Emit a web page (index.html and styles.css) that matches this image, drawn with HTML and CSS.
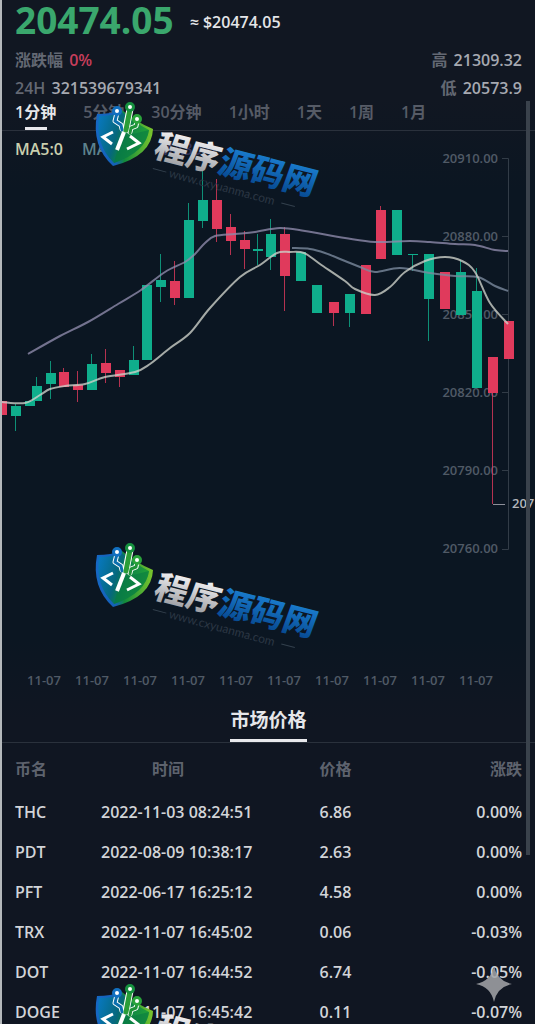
FILE: index.html
```html
<!DOCTYPE html>
<html lang="zh-CN">
<head>
    <meta charset="UTF-8">
    <meta name="viewport" content="width=device-width, initial-scale=1.0">
    <title>市场价格</title>
    <link rel="stylesheet" href="styles.css">
</head>
<body>
    <div class="page">
        <header class="quote">
            <div class="quote-main">
                <span class="price">20474.05</span>
                <span class="usd">≈ $20474.05</span>
            </div>
            <div class="quote-row">
                <span><span class="label">涨跌幅</span> <span class="down">0%</span></span>
                <span><span class="label">高</span> 21309.32</span>
            </div>
            <div class="quote-row">
                <span><span class="label">24H</span> 321539679341</span>
                <span><span class="label">低</span> 20573.9</span>
            </div>
        </header>

        <nav class="tabs">
            <button class="tab active">1分钟</button>
            <button class="tab">5分钟</button>
            <button class="tab">30分钟</button>
            <button class="tab">1小时</button>
            <button class="tab">1天</button>
            <button class="tab">1周</button>
            <button class="tab">1月</button>
        </nav>

        <section class="chart">
            <div class="legend">
                <span class="ma5">MA5:0</span>
                <span class="ma10">MA10:0</span>
                <span class="ma30">MA30:0</span>
            </div>
            <svg id="kline" viewBox="2 131 533 570"></svg>
        </section>

        <section class="market">
            <div class="market-head">
                <h2>市场价格</h2>
            </div>
            <table>
                <thead>
                    <tr><th>币名</th><th>时间</th><th>价格</th><th>涨跌</th></tr>
                </thead>
                <tbody>
                    <tr><td>THC</td><td>2022-11-03 08:24:51</td><td>6.86</td><td>0.00%</td></tr>
                    <tr><td>PDT</td><td>2022-08-09 10:38:17</td><td>2.63</td><td>0.00%</td></tr>
                    <tr><td>PFT</td><td>2022-06-17 16:25:12</td><td>4.58</td><td>0.00%</td></tr>
                    <tr><td>TRX</td><td>2022-11-07 16:45:02</td><td>0.06</td><td>-0.03%</td></tr>
                    <tr><td>DOT</td><td>2022-11-07 16:44:52</td><td>6.74</td><td>-0.05%</td></tr>
                    <tr><td>DOGE</td><td>2022-11-07 16:45:42</td><td>0.11</td><td>-0.07%</td></tr>
                </tbody>
            </table>
        </section>

        <div class="scrollbar"></div>

        <!-- Watermarks -->
        <div class="watermarks">
            <svg class="watermark" viewBox="0 0 240 110">
                <defs>
                    <linearGradient id="shieldFill" x1="0" y1="0" x2="1" y2="0.3">
                        <stop offset="0" stop-color="#0879c4"/>
                        <stop offset="0.45" stop-color="#06687c"/>
                        <stop offset="0.6" stop-color="#0a7f4a"/>
                        <stop offset="1" stop-color="#22a038"/>
                    </linearGradient>
                    <linearGradient id="shieldEdge" x1="0" y1="0" x2="1" y2="0">
                        <stop offset="0" stop-color="#1668c4"/>
                        <stop offset="0.35" stop-color="#1560b8"/>
                        <stop offset="0.5" stop-color="#118a3c"/>
                        <stop offset="1" stop-color="#7cc62c"/>
                    </linearGradient>
                    <linearGradient id="silver" x1="0" y1="0" x2="0" y2="1">
                        <stop offset="0.2" stop-color="#f0f0f2"/>
                        <stop offset="0.9" stop-color="#9a9ca1"/>
                    </linearGradient>
                    <linearGradient id="blue" x1="0" y1="0" x2="0" y2="1">
                        <stop offset="0.2" stop-color="#1a7cce"/>
                        <stop offset="0.9" stop-color="#06488f"/>
                    </linearGradient>
                    <g id="mark">
                        <path d="M2 12 Q16 12 27 8 Q41 20 58 27 Q57 54 18 64 Q-4 44 2 12Z" fill="url(#shieldEdge)"/>
                        <path d="M4 14 Q17 14 27 10 Q40 21 54 28 Q51 50 19 61 Q0 43 4 14Z" fill="url(#shieldFill)"/>
                        <path d="M30 34 L54 28 Q51 50 19 61 L22 50Z" fill="#087a43" opacity="0.6"/>
                        <g fill="none" stroke-linecap="round" stroke-linejoin="round">
                            <g stroke="#fff" stroke-width="5">
                                <path d="M22 11 L20 19 L26 23 L27 27"/>
                                <path d="M42 19 L41 24 L36 26 L35 30"/>
                                <path d="M35 7 L31 27" stroke-width="7"/>
                            </g>
                            <path d="M22 11 L20 19 L26 23 L27 28" stroke="#0b6fae" stroke-width="3"/>
                            <path d="M42 19 L41 24 L36 26 L35 31" stroke="#1f9338" stroke-width="3"/>
                            <path d="M35 7 L31 28" stroke="#2a9d37" stroke-width="5"/>
                        </g>
                        <circle cx="22" cy="9" r="3.5" fill="#fff" stroke="#1270c0" stroke-width="3"/>
                        <circle cx="35" cy="5" r="3.5" fill="#fff" stroke="#16913f" stroke-width="3"/>
                        <circle cx="42" cy="17" r="3.5" fill="#fff" stroke="#2aa33b" stroke-width="3"/>
                        <g fill="none" stroke="#fff" stroke-width="3">
                            <path d="M18 30 L8 35 L17 42"/>
                            <path d="M29 30 L22 48" stroke-width="4"/>
                            <path d="M35 34 L44 41 L32 47"/>
                        </g>
                        <g transform="translate(57 54) rotate(14)">
                            <g transform="skewX(-6)">
                                <text class="brand" fill="url(#silver)">程序</text>
                                <text class="brand" x="66" fill="url(#blue)">源码网</text>
                            </g>
                        </g>
                        <g transform="translate(57 58) rotate(15)">
                            <text class="site" x="20" y="12">www.cxyuanma.com</text>
                            <path d="M3 8 H17 M136 8 H150" stroke="#33404d"/>
                        </g>
                    </g>
                </defs>
                <use href="#mark"/>
            </svg>
            <svg class="watermark" viewBox="0 0 240 110"><use href="#mark"/></svg>
            <svg class="watermark" viewBox="0 0 240 110"><use href="#mark"/></svg>
        </div>

        <svg class="sparkle" viewBox="0 0 36 36">
            <path d="M18 0 Q21 15 36 18 Q21 21 18 36 Q15 21 0 18 Q15 15 18 0Z"/>
        </svg>
    </div>

    <script src="chart.js"></script>
</body>
</html>
```

FILE: styles.css
```css
* {
    box-sizing: border-box;
}
body {
    margin: 0;
    background: #101620;
    color: #d2d4d8;
    font-family: "Open Sans", "Noto Sans CJK SC", sans-serif;
    font-size: 16px;
    font-weight: 600;
}
.page {
    position: relative;
    height: 100vh;
    overflow: hidden;
    border-left: 2px solid #b4b8bb;
    background: linear-gradient(#111722 0, #111722 100px, #0b1622 190px, #0b1622 640px, #101622 720px);
}

/* Quote */
.quote {
    padding: 0 13px;
}
.quote-main {
    display: flex;
    align-items: center;
    gap: 16px;
    height: 46px;
    padding-bottom: 6px;
}
.price {
    color: #3aa76d;
    font-size: 37px;
    font-weight: 700;
    line-height: 40px;
}
.usd {
    padding-top: 4px;
    color: #e4e5e8;
}
.quote-row {
    display: flex;
    justify-content: space-between;
    line-height: 28px;
    color: #a6a9b1;
}
.label {
    margin-right: 2px;
    color: #636873;
}
.down {
    color: #c73e5c;
}

/* Period tabs */
.tabs {
    display: flex;
    gap: 27px;
    padding: 0 13px;
    border-bottom: 1px solid #2a313c;
}
.tab {
    position: relative;
    height: 28px;
    padding: 0 0 8px;
    border: 0;
    background: none;
    color: #565b66;
    font: inherit;
    line-height: 20px;
    cursor: pointer;
}
.tab.active {
    color: #e6e7ea;
}
.tab.active::after {
    content: "";
    position: absolute;
    left: 50%;
    bottom: 0;
    width: 22px;
    height: 3px;
    margin-left: -11px;
    background: #e8e8ec;
}

/* Chart */
.chart {
    position: relative;
}
.chart svg {
    display: block;
    width: 100%;
}
.legend {
    position: absolute;
    top: 6px;
    left: 13px;
    display: flex;
    gap: 19px;
    line-height: 24px;
}
.ma5 {
    color: #c9cfae;
}
.ma10 {
    color: #5d828d;
}
.ma30 {
    color: #33345a;
}
.axis-text {
    fill: #505a66;
    font-size: 13px;
}
.last-text {
    fill: #b3b7bc;
    font-size: 13px;
}
.axis-line {
    fill: none;
    stroke: #323c47;
}
.up-bar {
    fill: #0fae8c;
    stroke: #0fae8c;
}
.down-bar {
    fill: #e03a5c;
    stroke: #e03a5c;
}
.bar-body {
    stroke: none;
}
.bar-wick {
    stroke-opacity: 0.8;
}
.line {
    fill: none;
    stroke-width: 2;
    stroke-opacity: 0.8;
}
.line-ma5 {
    stroke: #ccd0c8;
}
.line-ma10 {
    stroke: #7b8a9e;
}
.line-ma30 {
    stroke: #8d89aa;
}

/* Market table */
.market-head {
    border-bottom: 1px solid #2a313c;
    text-align: center;
}
.market-head h2 {
    width: max-content;
    margin: 0 auto;
    border-bottom: 3px solid #e8e8ec;
    color: #e6e7ea;
    font-size: 19px;
    font-weight: 600;
    line-height: 38px;
}
table {
    width: 100%;
    table-layout: fixed;
    border-collapse: collapse;
}
th,
td {
    height: 40px;
    padding: 0;
    text-align: left;
    white-space: nowrap;
}
th {
    height: 49px;
    color: #5e636e;
    font-weight: 600;
}
th:nth-child(1),
td:nth-child(1) {
    width: 99px;
    padding-left: 13px;
}
th:nth-child(2) {
    width: 41%;
    padding-left: 51px;
}
th:nth-child(4),
td:nth-child(4) {
    padding-right: 13px;
    text-align: right;
}

.scrollbar {
    position: absolute;
    top: 101px;
    right: 5px;
    width: 4px;
    height: 754px;
    background: #3a424c;
}

/* Overlays */
.watermarks {
    position: absolute;
    top: 102px;
    left: 93px;
    display: grid;
    gap: 331px;
    pointer-events: none;
}
.watermark {
    width: 240px;
    height: 110px;
    overflow: visible;
}
.brand {
    font-family: "Noto Sans CJK SC", sans-serif;
    font-size: 33px;
    font-weight: 900;
}
.site {
    fill: #2b3744;
    font-family: Lato, sans-serif;
    font-size: 12px;
    font-weight: 400;
}
.sparkle {
    position: absolute;
    right: 23px;
    bottom: 22px;
    width: 36px;
    height: 36px;
    fill: #a4a6aa;
    opacity: 0.85;
}
```

FILE: chart.js
```js
// x centre, body top, body bottom, wick top, wick bottom, direction
const candles = [
    [1, 401, 415, 401, 415, 'down'],
    [15, 406, 416, 404, 431, 'up'],
    [29, 401, 406, 401, 406, 'up'],
    [36, 386, 401, 377, 401, 'up'],
    [50, 373, 384, 361, 399, 'up'],
    [63, 372, 387, 368, 387, 'down'],
    [77, 385, 390, 371, 402, 'down'],
    [91, 364, 390, 354, 390, 'up'],
    [105, 363, 373, 349, 383, 'down'],
    [119, 370, 377, 370, 387, 'down'],
    [133, 360, 375, 346, 375, 'up'],
    [146, 285, 360, 285, 360, 'up'],
    [160, 280, 287, 254, 302, 'up'],
    [174, 281, 298, 261, 305, 'down'],
    [188, 220, 298, 203, 298, 'up'],
    [202, 200, 221, 168, 228, 'up'],
    [216, 200, 229, 179, 242, 'down'],
    [230, 227, 241, 214, 255, 'down'],
    [244, 240, 249, 231, 269, 'down'],
    [257, 249, 251, 234, 265, 'up'],
    [270, 234, 257, 219, 270, 'up'],
    [284, 234, 276, 227, 311, 'down'],
    [300, 252, 281, 252, 281, 'up'],
    [316, 285, 313, 285, 313, 'up'],
    [333, 302, 313, 302, 326, 'down'],
    [349, 294, 313, 294, 327, 'up'],
    [365, 265, 314, 265, 314, 'down'],
    [380, 210, 259, 206, 259, 'down'],
    [396, 210, 255, 210, 255, 'up'],
    [412, 254, 255, 254, 271, 'up'],
    [428, 254, 299, 254, 341, 'up'],
    [444, 272, 309, 272, 309, 'down'],
    [460, 272, 315, 260, 315, 'up'],
    [476, 291, 388, 268, 388, 'up'],
    [492, 357, 393, 357, 504, 'down'],
    [508, 321, 359, 321, 359, 'down']
];

const lines = {
    ma30: [[28, 354], [60, 336], [88, 322], [118, 304], [141, 290], [165, 272], [185, 262], [195, 254],
        [205, 243], [215, 236], [235, 234], [255, 232], [280, 228], [305, 231], [345, 238], [375, 242],
        [410, 241], [430, 242], [455, 244], [475, 245], [495, 250], [508, 251]],
    ma10: [[292, 248], [310, 249], [325, 253], [345, 261], [360, 267], [375, 272], [400, 268], [430, 273],
        [455, 276], [478, 277], [495, 286], [508, 291]],
    ma5: [[2, 402], [25, 403], [40, 395], [50, 389], [65, 386], [85, 384], [105, 377], [135, 372],
        [150, 364], [170, 348], [190, 333], [210, 308], [240, 277], [260, 265], [277, 253], [290, 252],
        [304, 253], [320, 264], [345, 281], [355, 289], [375, 295], [390, 287], [405, 272], [425, 261],
        [445, 257], [462, 261], [475, 272], [490, 303], [508, 324]]
};

const prices = ['20910.00', '20880.00', '20850.00', '20820.00', '20790.00', '20760.00'];

// Smooth path through all points
function smoothPath(p) {
    let d = `M${p[0]}`;
    for (let i = 0; i < p.length - 1; i++) {
        const a = p[i - 1] || p[i];
        const b = p[i];
        const c = p[i + 1];
        const e = p[i + 2] || c;
        d += ` C${b[0] + (c[0] - a[0]) / 6} ${b[1] + (c[1] - a[1]) / 6}`;
        d += ` ${c[0] - (e[0] - b[0]) / 6} ${c[1] - (e[1] - b[1]) / 6} ${c[0]} ${c[1]}`;
    }
    return d;
}

let out = '<path class="axis-line" d="M502 158.5 H508.5 V549.5 H502"/>';

prices.forEach((price, i) => {
    const y = 158 + i * 78;
    out += `<text class="axis-text" x="498" y="${y + 5}" text-anchor="end">${price}</text>`;
    if (i > 0 && i < prices.length - 1) {
        out += `<path class="axis-line" d="M502 ${y + 0.5} H508"/>`;
    }
});

for (let i = 0; i < 10; i++) {
    out += `<text class="axis-text" x="${44 + i * 48}" y="685" text-anchor="middle">11-07</text>`;
}

candles.forEach(([x, top, bottom, high, low, dir]) => {
    out += `<g class="${dir}-bar">
        <path class="bar-wick" d="M${x + 0.5} ${high} V${low}"/>
        <rect class="bar-body" x="${x - 4}" y="${top}" width="10" height="${bottom - top}"/>
    </g>`;
});

for (const name in lines) {
    out += `<path class="line line-${name}" d="${smoothPath(lines[name])}"/>`;
}

// Lowest price marker
out += '<path d="M493 504.5 H505" stroke="#8d8f99"/>';
out += '<text class="last-text" x="512" y="508">207</text>';

document.getElementById('kline').innerHTML = out;
```
